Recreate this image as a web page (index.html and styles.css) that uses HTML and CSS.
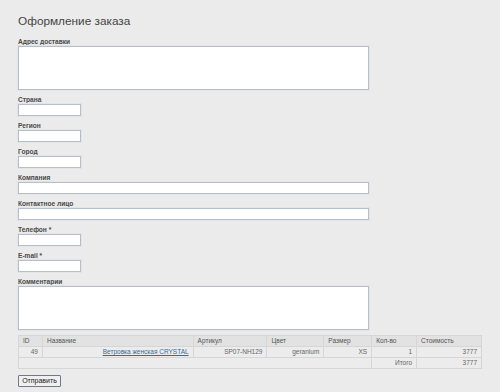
FILE: index.html
```html
<!DOCTYPE html>
<html lang="ru">
<head>
<meta charset="utf-8">
<link rel="stylesheet" href="styles.css">
</head>
<body>
<div class="page">
  <h1 class="title">Оформление заказа</h1>
  <form class="form">
    <div class="group">
      <label class="label">Адрес доставки</label>
      <textarea class="field area"></textarea>
    </div>
    <div class="group">
      <label class="label">Страна</label>
      <input class="field short" type="text">
    </div>
    <div class="group">
      <label class="label">Регион</label>
      <input class="field short" type="text">
    </div>
    <div class="group">
      <label class="label">Город</label>
      <input class="field short" type="text">
    </div>
    <div class="group">
      <label class="label">Компания</label>
      <input class="field long" type="text">
    </div>
    <div class="group">
      <label class="label">Контактное лицо</label>
      <input class="field long" type="text">
    </div>
    <div class="group">
      <label class="label">Телефон *</label>
      <input class="field short" type="text">
    </div>
    <div class="group">
      <label class="label">E-mail *</label>
      <input class="field short" type="text">
    </div>
    <div class="group last">
      <label class="label">Комментарии</label>
      <textarea class="field area"></textarea>
    </div>
    <table class="order">
      <thead>
        <tr>
          <th class="c-id">ID</th>
          <th class="c-name">Название</th>
          <th class="c-sku">Артикул</th>
          <th class="c-color">Цвет</th>
          <th class="c-size">Размер</th>
          <th class="c-qty">Кол-во</th>
          <th class="c-cost">Стоимость</th>
        </tr>
      </thead>
      <tbody>
        <tr>
          <td>49</td>
          <td><a href="#" class="link">Ветровка женская CRYSTAL</a></td>
          <td>SP07-NH129</td>
          <td>geranium</td>
          <td>XS</td>
          <td>1</td>
          <td>3777</td>
        </tr>
        <tr class="total">
          <td colspan="5" class="blank"></td>
          <td>Итого</td>
          <td>3777</td>
        </tr>
      </tbody>
    </table>
    <button type="button" class="submit">Отправить</button>
  </form>
</div>
</body>
</html>
```
FILE: styles.css
```css
html, body {
  margin: 0;
  padding: 0;
  background: #ebebeb;
}
.page {
  padding: 0 18px;
  font-family: "Liberation Sans", Arial, sans-serif;
  color: #333;
}
.title {
  margin: 0;
  padding-top: 14px;
  height: 25px;
  font-size: 11.8px;
  line-height: 15px;
  font-weight: normal;
  color: #444;
}
.form {
  display: flex;
  flex-direction: column;
  align-items: flex-start;
}
.group {
  display: flex;
  flex-direction: column;
  align-items: flex-start;
  margin-bottom: 7px;
}
.group.last {
  margin-bottom: 5px;
}
.label {
  display: block;
  height: 7px;
  font-size: 6.6px;
  line-height: 6px;
  font-weight: bold;
  color: #4a4a4a;
  white-space: nowrap;
}
.field {
  box-sizing: border-box;
  margin: 0;
  padding: 0;
  border: 1px solid #b3bfcd;
  background: #fff;
  outline: none;
  display: block;
  box-shadow: 0 0 0 1px #e4e4e4;
}
.short {
  width: 63px;
  height: 12px;
}
.long {
  width: 351px;
  height: 12px;
}
.area {
  width: 351px;
  height: 44px;
  resize: none;
}
.order {
  border-collapse: collapse;
  width: 464px;
  font-size: 6.5px;
  color: #666;
  margin-bottom: 6px;
}
.order th, .order td {
  border: 1px solid #d6d6d6;
  height: 10px;
  padding: 0 4px;
  line-height: 10px;
  white-space: nowrap;
}
.order th {
  background: #e2e2e2;
  text-align: left;
  font-weight: normal;
  color: #555;
}
.order td {
  text-align: right;
  background: #ececec;
}
.order .blank {
  border-left: 1px solid #d6d6d6;
}
.c-id { width: 15px; }
.c-name { width: 142px; }
.c-sku { width: 65px; }
.c-color { width: 48px; }
.c-size { width: 39px; }
.c-qty { width: 36px; }
.c-cost { width: 56px; }
.link {
  color: #2f6e9e;
  text-decoration: underline;
}
.submit {
  box-sizing: border-box;
  width: 43px;
  height: 12px;
  margin: 0;
  padding: 0;
  font-family: "Liberation Sans", Arial, sans-serif;
  font-size: 7px;
  line-height: 10px;
  color: #222;
  background: #f0f0f0;
  border: 1px solid #707a86;
  border-radius: 1px;
}
```
